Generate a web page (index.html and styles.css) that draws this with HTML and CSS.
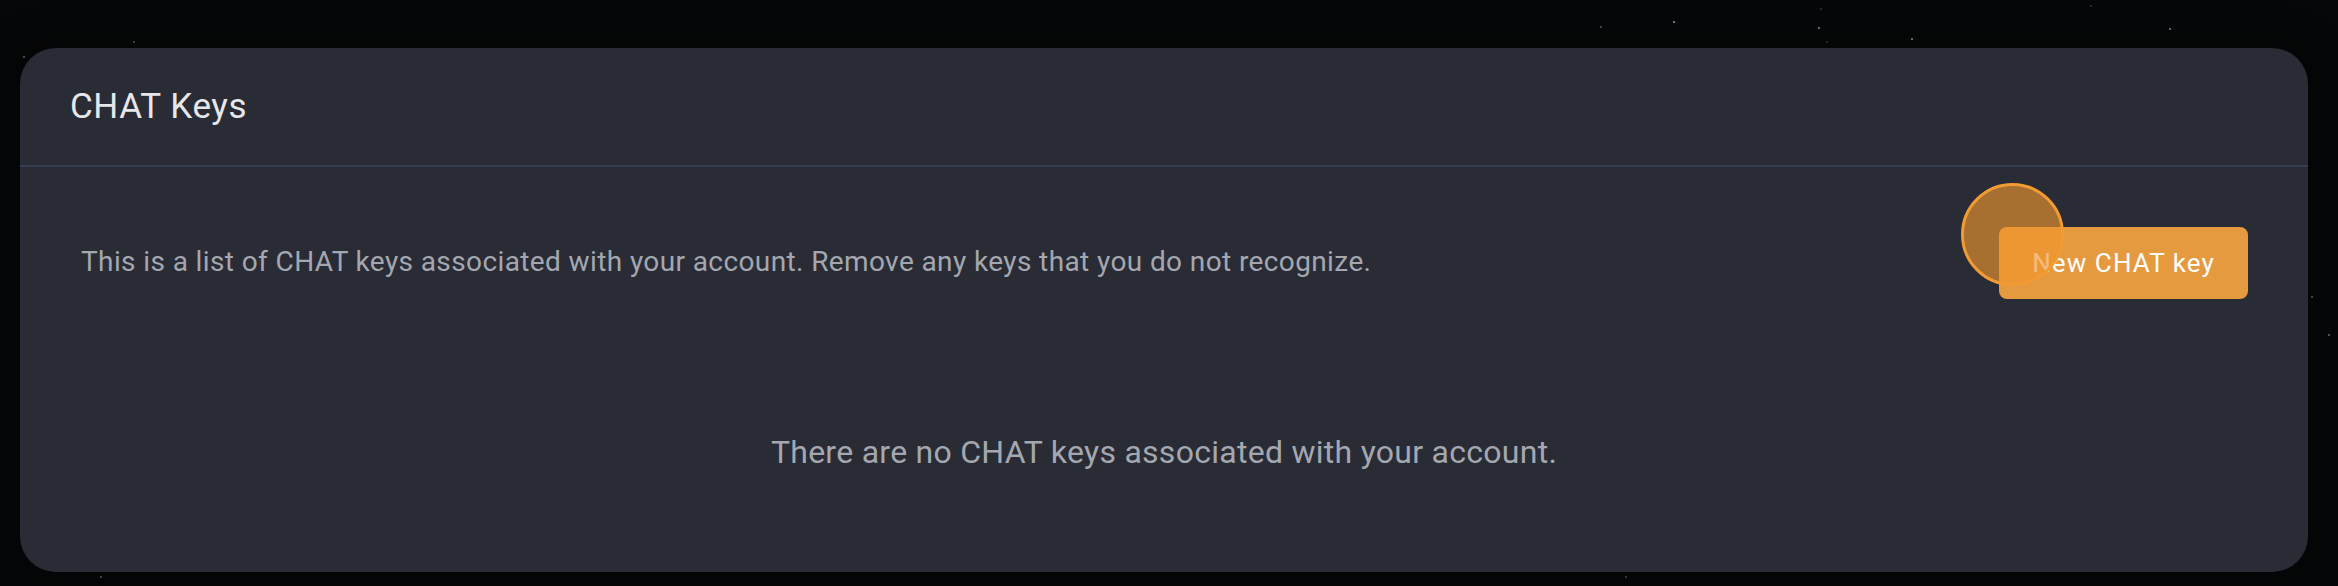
FILE: index.html
```html
<!DOCTYPE html>
<html lang="en">
<head>
<meta charset="utf-8">
<title>CHAT Keys</title>
<link rel="stylesheet" href="styles.css">
</head>
<body>
<div class="stars" aria-hidden="true"></div>
<main class="page">
  <section class="card">
    <header class="card-header">
      <h1 class="card-title">CHAT Keys</h1>
    </header>
    <div class="intro-row">
      <p class="intro-text">This is a list of CHAT keys associated with your account. Remove any keys that you do not recognize.</p>
      <div class="action">
        <button class="btn-primary" type="button">New CHAT key</button>
        <span class="ripple"></span>
      </div>
    </div>
    <p class="empty">There are no CHAT keys associated with your account.</p>
  </section>
</main>
</body>
</html>
```

FILE: styles.css
```css
html, body {
  margin: 0;
  padding: 0;
}

body {
  width: 2338px;
  height: 586px;
  overflow: hidden;
  background: #060708;
  font-family: Roboto, "Open Sans", Arial, sans-serif;
  position: relative;
}

.stars {
  position: absolute;
  left: 0;
  top: 0;
  width: 2px;
  height: 2px;
  border-radius: 50%;
  background: transparent;
  box-shadow:
    23px 56px 0 0 rgba(200,200,200,0.55),
    133px 41px 0 0 rgba(200,200,200,0.5),
    100px 576px 0 0 rgba(200,200,200,0.55),
    1625px 576px 0 0 rgba(200,200,200,0.45),
    1600px 26px 0 0 rgba(200,200,200,0.45),
    1673px 21px 0 0 rgba(220,220,220,0.75),
    1818px 27px 0 0 rgba(220,220,220,0.65),
    1820px 8px 0 0 rgba(200,200,200,0.25),
    1826px 41px 0 0 rgba(200,200,200,0.3),
    1911px 38px 0 0 rgba(220,220,220,0.75),
    2090px 5px 0 0 rgba(200,200,200,0.25),
    2169px 28px 0 0 rgba(220,220,220,0.65),
    2311px 296px 0 0 rgba(200,200,200,0.55),
    2328px 334px 0 0 rgba(200,200,200,0.55);
}

.page {
  padding: 48px 30px 14px 20px;
  position: relative;
}

.card {
  background: #292c35;
  border-radius: 36px;
  height: 524px;
  box-sizing: border-box;
  box-shadow: 0 0 40px rgba(0, 0, 0, 0.6);
}

.card-header {
  padding: 41px 50px 41px;
  border-bottom: 2px solid #353e55;
}

.card-title {
  margin: 0;
  font-size: 35px;
  line-height: 35px;
  font-weight: 400;
  letter-spacing: 0.55px;
  color: #e7e7ea;
}

.intro-row {
  display: flex;
  align-items: center;
  justify-content: space-between;
  padding: 60px 60px 0 61px;
  height: 72px;
}

.intro-text {
  margin: 0;
  font-size: 28px;
  line-height: 28px;
  letter-spacing: 0.39px;
  color: #a4a7b0;
  margin-top: -2px;
}

.action {
  position: relative;
}

.btn-primary {
  display: block;
  height: 72px;
  padding: 0 33px;
  border: 0;
  border-radius: 8px;
  background: #e69a3f;
  color: #ffffff;
  font-family: inherit;
  font-size: 26px;
  line-height: 26px;
  letter-spacing: 1.1px;
}

.ripple {
  position: absolute;
  left: -38px;
  top: -44px;
  width: 97px;
  height: 97px;
  border-radius: 50%;
  border: 3px solid #f29a33;
  background: rgba(240, 150, 46, 0.64);
  pointer-events: none;
}

.empty {
  margin: 137px 0 0;
  text-align: center;
  font-size: 32px;
  line-height: 32px;
  letter-spacing: 0.27px;
  color: #a4a7b0;
}
```
